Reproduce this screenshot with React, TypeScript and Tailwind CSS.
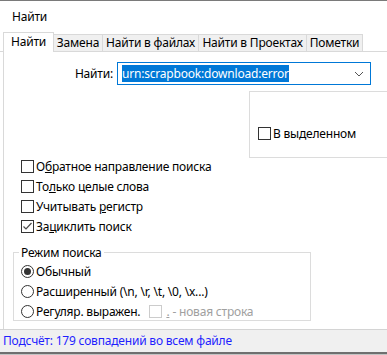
import React from "react";

const font = { fontFamily: '"Noto Sans", "Liberation Sans", sans-serif' };

function Check({ checked = false, disabled = false }: { checked?: boolean; disabled?: boolean }) {
  return (
    <div
      className={
        "w-[13px] h-[13px] shrink-0 border bg-white flex items-center justify-center " +
        (disabled ? "border-[#cccccc]" : "border-[#333333]")
      }
    >
      {checked && (
        <svg width="11" height="11" viewBox="0 0 11 11">
          <polyline points="1.5,5.5 4,8 9.5,2" fill="none" stroke="#4a4a4a" strokeWidth="1.2" />
        </svg>
      )}
    </div>
  );
}

function Radio({ checked = false }: { checked?: boolean }) {
  return (
    <div className="w-[13px] h-[13px] shrink-0 rounded-full border border-[#333333] bg-white flex items-center justify-center">
      {checked && <div className="w-[7px] h-[7px] rounded-full bg-[#333333]" />}
    </div>
  );
}

export default function App() {
  return (
    <div
      className="w-[387px] h-[355px] bg-white flex flex-col overflow-hidden text-[12px] tracking-[-0.2px] text-black leading-none"
      style={font}
    >
      {/* title */}
      <div className="h-[32px] border-t border-[#7a7a7a] flex items-center pl-[12px] shrink-0">
        <span className="text-[12px]">Найти</span>
      </div>

      {/* tabs */}
      <div className="h-[20px] flex items-end shrink-0">
        <div className="w-[3px] h-full border-b border-[#d9d9d9]" />
        <div className="w-[51px] h-[20px] bg-white border border-b-0 border-[#d9d9d9] flex items-center pl-[7px] pb-[1px]">
          Найти
        </div>
        <div className="w-[49px] h-[18px] bg-[#f0f0f0] border-t border-r border-b border-[#d9d9d9] flex items-center justify-center">
          Замена
        </div>
        <div className="w-[96px] h-[18px] bg-[#f0f0f0] border-t border-r border-b border-[#d9d9d9] flex items-center justify-center">
          Найти в файлах
        </div>
        <div className="w-[108px] h-[18px] bg-[#f0f0f0] border-t border-r border-b border-[#d9d9d9] flex items-center justify-center">
          Найти в Проектах
        </div>
        <div className="w-[56px] h-[18px] bg-[#f0f0f0] border-t border-r border-b border-[#d9d9d9] flex items-center justify-center">
          Пометки
        </div>
        <div className="flex-1 h-full border-b border-[#d9d9d9]" />
      </div>

      {/* content */}
      <div className="h-[277px] ml-[3px] border-l border-[#d9d9d9] flex flex-col shrink-0">
        <div className="mt-[10px] flex items-center h-[23px]">
          <div className="w-[110px] text-right pr-[1px]">Найти:</div>
          <div className="ml-[3px] w-[254px] h-[23px] border border-[#0078d7] flex items-center pl-[4px] pr-[6px]">
            <span className="bg-[#0078d7] text-white h-[17px] flex items-center">
              urn:scrapbook:download:error
            </span>
            <div className="flex-1" />
            <svg width="10" height="6" viewBox="0 0 10 6">
              <polyline points="1,1 5,5 9,1" fill="none" stroke="#555555" strokeWidth="1" />
            </svg>
          </div>
        </div>

        <div className="mt-[6px] ml-[245px] w-[160px] h-[67px] border border-[#dcdcdc] flex items-end pl-[8px] pb-[17px]">
          <div className="flex items-center gap-[2px]">
            <Check />
            <span>В выделенном</span>
          </div>
        </div>

        <div className="mt-[2px] pl-[17px] flex flex-col gap-[7px]">
          <div className="flex items-center gap-[2px] h-[13px]">
            <Check />
            <span>
              О<span className="underline">б</span>ратное направление поиска
            </span>
          </div>
          <div className="flex items-center gap-[2px] h-[13px]">
            <Check />
            <span>
              То<span className="underline">л</span>ько целые слова
            </span>
          </div>
          <div className="flex items-center gap-[2px] h-[13px]">
            <Check />
            <span>
              Учитывать <span className="underline">р</span>егистр
            </span>
          </div>
          <div className="flex items-center gap-[2px] h-[13px]">
            <Check checked />
            <span>
              За<span className="underline">ц</span>иклить поиск
            </span>
          </div>
        </div>

        <div className="relative mt-[19px] ml-[9px] w-[298px] h-[69px] border border-[#dcdcdc] pl-[7px] pt-[12px] flex flex-col gap-[7px]">
          <div className="absolute -top-[8px] left-[5px] bg-white px-[2px] h-[15px] flex items-center">
            Режим поиска
          </div>
          <div className="flex items-center gap-[2px] h-[13px]">
            <Radio checked />
            <span>Обычный</span>
          </div>
          <div className="flex items-center gap-[2px] h-[13px]">
            <Radio />
            <span>Расширенный (\n, \r, \t, \0, \x...)</span>
          </div>
          <div className="flex items-center h-[13px]">
            <Radio />
            <span className="ml-[2px]">Регуляр. выражен.</span>
            <div className="ml-[9px]">
              <Check disabled />
            </div>
            <span className="ml-[4px] text-[#a0a0a0] underline">.</span>
            <span className="ml-[3px] text-[#a0a0a0]">- новая строка</span>
          </div>
        </div>
      </div>

      {/* status bar */}
      <div className="h-[23px] bg-[#f0f0f0] border-t border-[#d4d4d4] flex items-center pl-[3px] text-[#1f1fff] shrink-0">
        Подсчёт: 179 совпадений во всем файле
      </div>
      <div className="h-[2px] bg-[#6f6f6f] shrink-0" />
      <div className="h-[1px] bg-[#c4c4c4] shrink-0" />
    </div>
  );
}
